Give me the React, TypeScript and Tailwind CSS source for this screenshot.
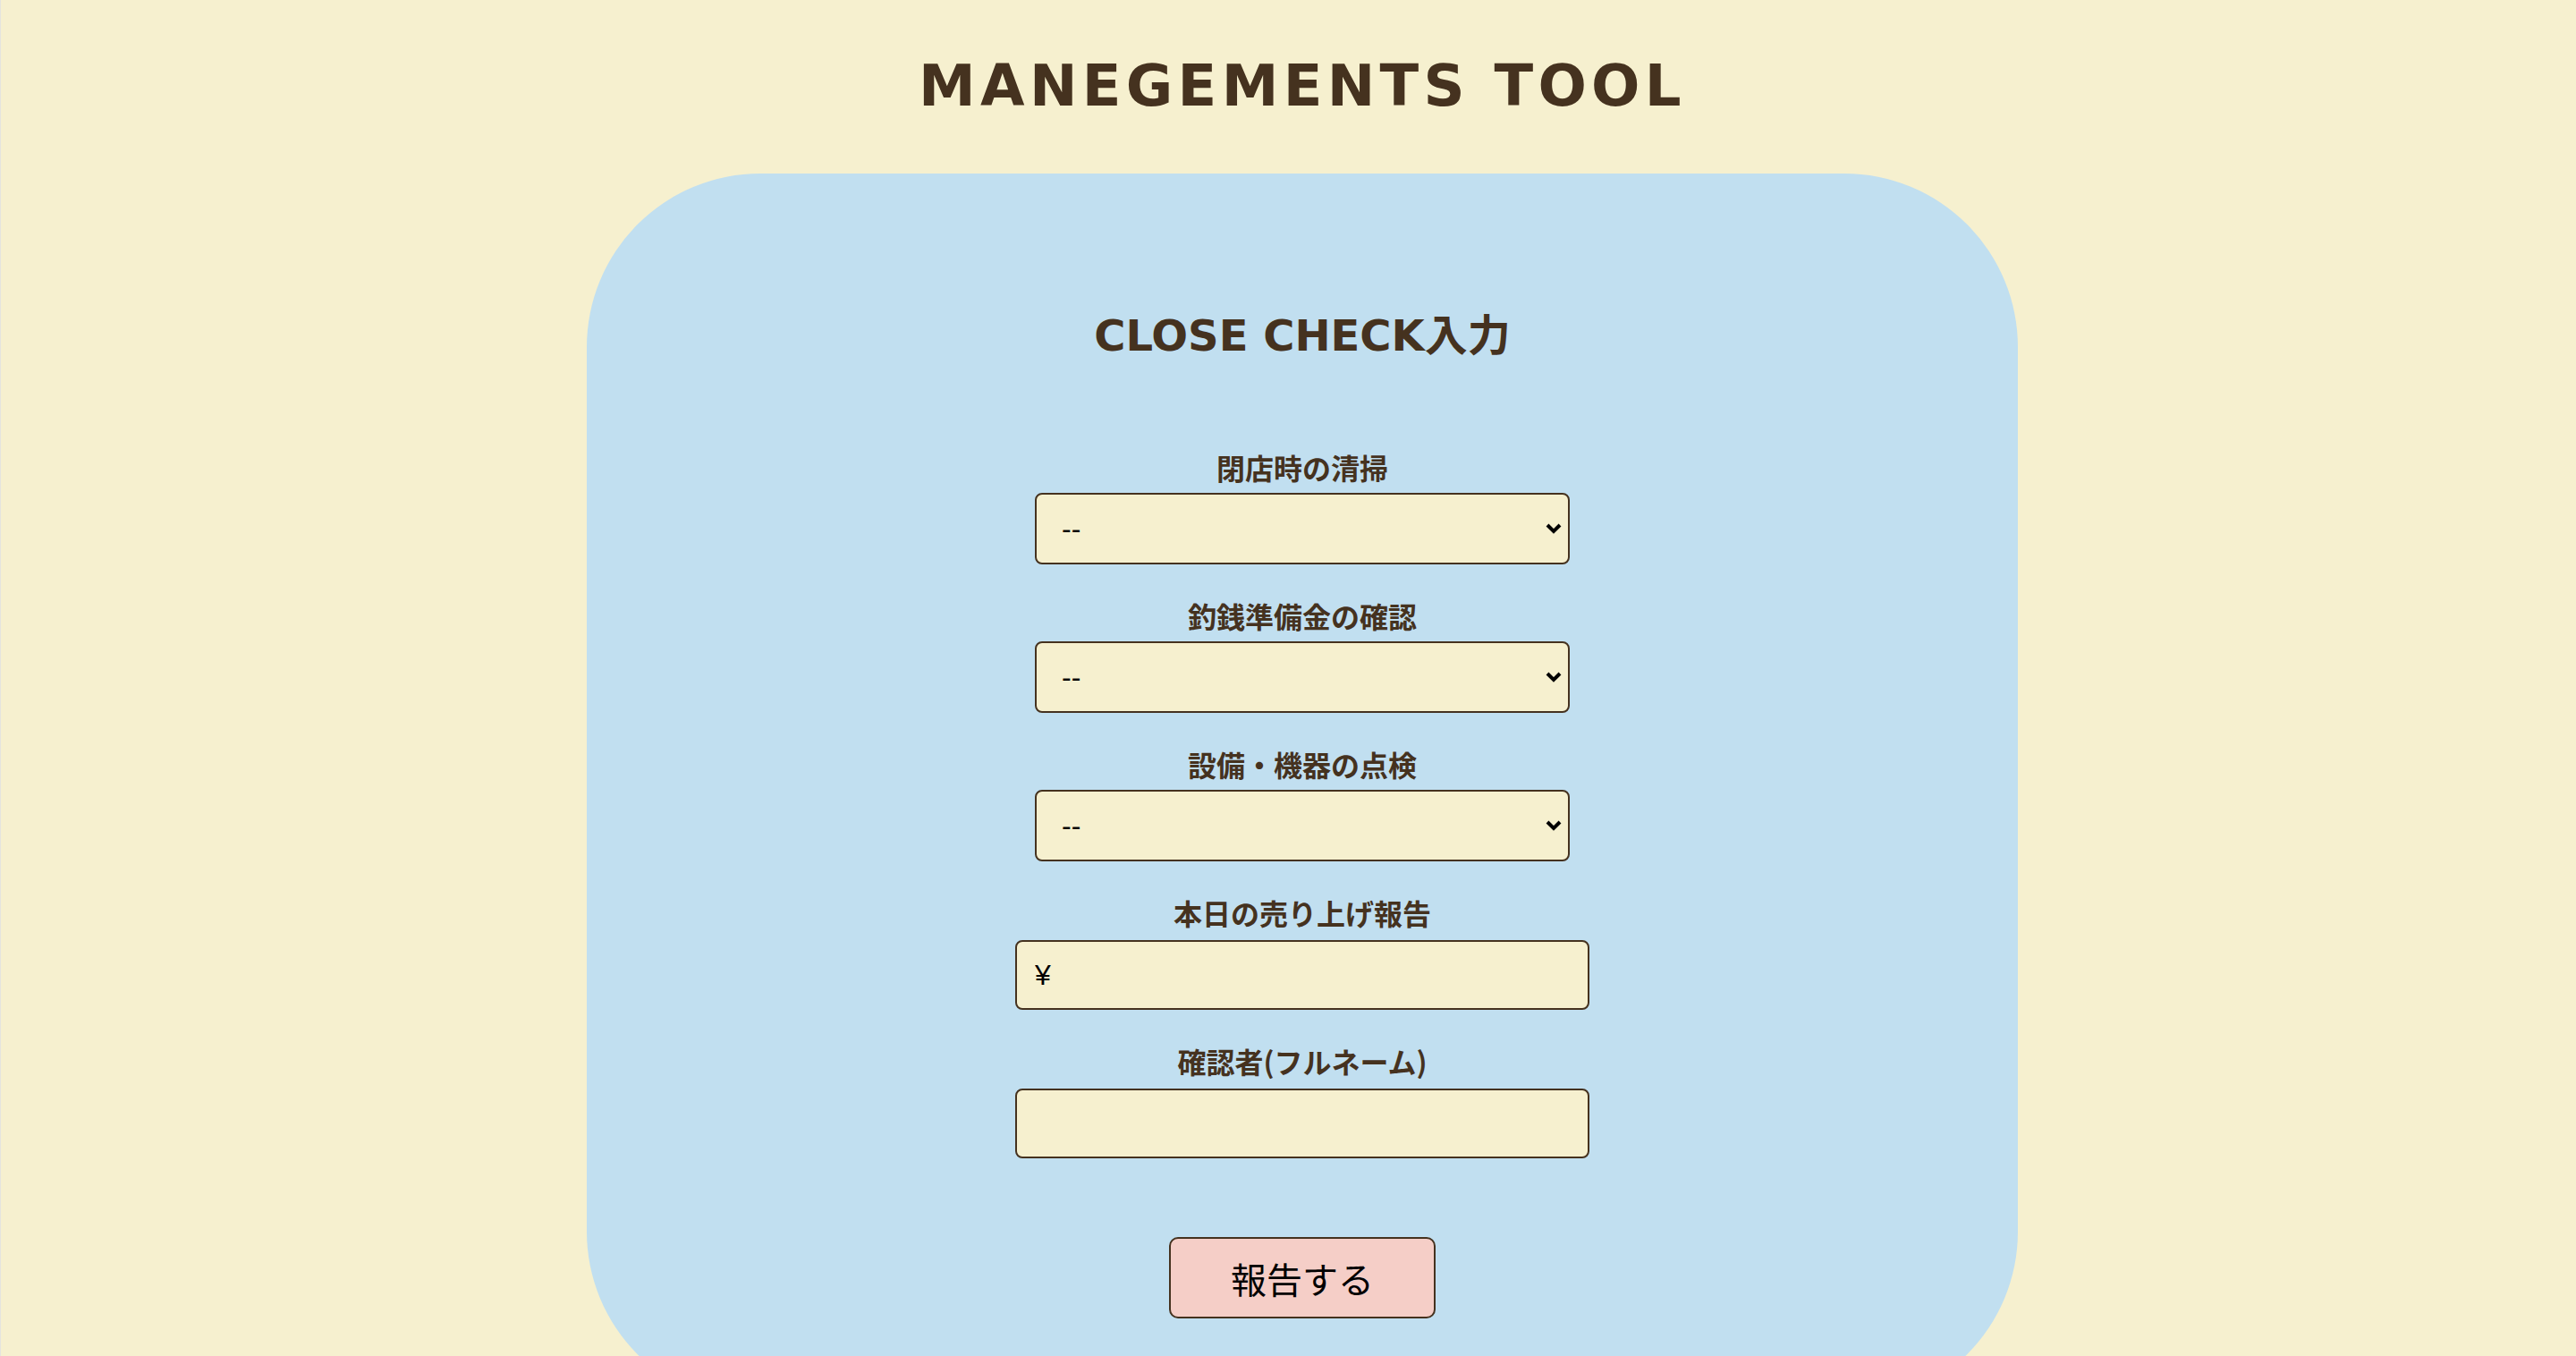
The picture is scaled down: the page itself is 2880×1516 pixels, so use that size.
const checks = ["閉店時の清掃", "釣銭準備金の確認", "設備・機器の点検"];

function Chevron() {
  return (
    <svg
      className="pointer-events-none absolute right-[8px] top-1/2 -translate-y-1/2"
      width="20"
      height="14"
      viewBox="0 0 20 14"
      fill="none"
    >
      <polyline points="3,3 10,10 17,3" stroke="#000" strokeWidth="4" />
    </svg>
  );
}

function SelectField({ label }: { label: string }) {
  return (
    <div className="flex flex-col items-center">
      <label className="text-[32px] leading-[32px] font-bold font-['Noto_Sans_CJK_JP',sans-serif]">
        {label}
      </label>
      <div className="relative mt-[13px]">
        <select
          defaultValue=""
          className="appearance-none w-[598px] h-[80px] rounded-[8px] border-2 border-[#45321f] bg-[#f6f0cf] pl-[28px] text-[32px] text-black font-['Liberation_Sans',sans-serif] outline-none"
        >
          <option value="">--</option>
          <option value="done">完了</option>
          <option value="not">未完了</option>
        </select>
        <Chevron />
      </div>
    </div>
  );
}

function InputField({ label, value }: { label: string; value?: string }) {
  return (
    <div className="flex flex-col items-center">
      <label className="text-[32px] leading-[32px] font-bold font-['Noto_Sans_CJK_JP',sans-serif]">
        {label}
      </label>
      <input
        type="text"
        defaultValue={value}
        className="mt-[15px] w-[642px] h-[78px] rounded-[8px] border-2 border-[#45321f] bg-[#f6f0cf] pl-[20px] text-[32px] text-black font-['Liberation_Sans','Noto_Sans_CJK_JP',sans-serif] outline-none"
      />
    </div>
  );
}

export default function App() {
  return (
    <div className="min-h-screen w-full bg-[#f6f0cf] border-l border-[#e4e4de] pl-[31px] flex flex-col items-center text-[#45321f]">
      <h1 className="mt-[64px] text-[64px] leading-[64px] font-bold tracking-[5.3px] font-['DejaVu_Sans',sans-serif]">
        MANEGEMENTS TOOL
      </h1>

      <main className="mt-[66px] w-[1600px] h-[1377px] shrink-0 rounded-[194px] bg-[#c1dff0] flex flex-col items-center pt-[157px]">
        <h2 className="text-[48px] leading-[48px] font-bold font-['DejaVu_Sans','Noto_Sans_CJK_JP',sans-serif]">
          CLOSE CHECK入力
        </h2>

        <form className="mt-[107px] flex flex-col items-center gap-[41px]">
          {checks.map((c) => (
            <SelectField key={c} label={c} />
          ))}
          <InputField label="本日の売り上げ報告" value="¥" />
          <InputField label="確認者(フルネーム)" />
          <button
            type="button"
            className="mt-[47px] w-[298px] h-[91px] rounded-[10px] border-2 border-[#45321f] bg-[#f5cec7] text-[40px] text-black font-['Noto_Sans_CJK_JP',sans-serif]"
          >
            報告する
          </button>
        </form>
      </main>
    </div>
  );
}
